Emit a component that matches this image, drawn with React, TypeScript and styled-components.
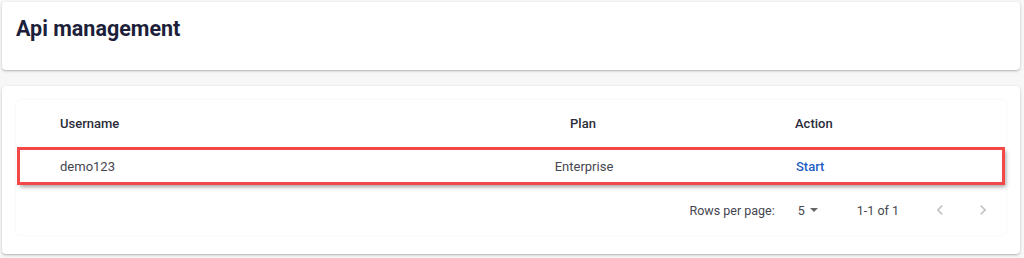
import styled, { createGlobalStyle } from 'styled-components';

const GlobalStyle = createGlobalStyle`
  body {
    margin: 0;
    background: #f7f7f7;
    font-family: Roboto, "Liberation Sans", sans-serif;
  }
`;

const Page = styled.div`
  display: flex;
  flex-direction: column;
  gap: 16px;
  padding: 2px 4px 4px 2px;
  width: 1024px;
  height: 258px;
  box-sizing: border-box;
`;

const Card = styled.div`
  background: #fff;
  border-radius: 4px;
  box-shadow: 0 1px 3px rgba(0, 0, 0, 0.22), 0 1px 1px rgba(0, 0, 0, 0.08);
`;

const HeaderCard = styled(Card)`
  height: 68px;
  box-sizing: border-box;
  padding: 13px 14px;
`;

const Title = styled.h1`
  margin: 0;
  font-size: 21.5px;
  font-weight: 700;
  color: #1d1f3b;
  line-height: 28px;
`;

const TableCard = styled(Card)`
  flex: 1;
  padding: 14px 14px 14px;
`;

const TablePaper = styled.div`
  background: #fff;
  border-radius: 4px;
  box-shadow: 0 0 2px rgba(0, 0, 0, 0.08);
  display: flex;
  flex-direction: column;
`;

const Row = styled.div<{ $highlight?: boolean }>`
  display: grid;
  grid-template-columns: 371px 392px 1fr;
  align-items: center;
  height: ${({ $highlight }) => ($highlight ? '38px' : '47px')};
  box-sizing: border-box;
  ${({ $highlight }) =>
    $highlight
      ? `
    margin: 0 1px;
    outline: 3px solid #f44747;
    outline-offset: -3px;
    box-shadow: 2px 3px 4px -1px rgba(0, 0, 0, 0.35);
  `
      : ''}
`;

const Cell = styled.div<{ $align?: 'left' | 'center'; $pad?: number; $head?: boolean; $link?: boolean }>`
  font-size: 13px;
  text-align: ${({ $align }) => $align || 'left'};
  padding-left: ${({ $pad }) => $pad || 0}px;
  font-weight: ${({ $head, $link }) => ($head || $link ? 500 : 400)};
  color: ${({ $head, $link }) => ($link ? '#1f5fc4' : $head ? '#2b2d3a' : '#45464f')};
`;

const Pagination = styled.div`
  display: flex;
  align-items: center;
  justify-content: flex-end;
  height: 50px;
  padding-right: 11px;
  font-size: 12.5px;
  color: #45464f;
`;

const RowsLabel = styled.span`
  margin-right: 23px;
`;

const Select = styled.span`
  display: flex;
  align-items: center;
  gap: 5px;
  margin-right: 39px;
`;

const Range = styled.span`
  margin-right: 29px;
`;

const NavButton = styled.span`
  display: flex;
  align-items: center;
  justify-content: center;
  width: 24px;
  height: 24px;
  color: #c4c4c4;
  & + & {
    margin-left: 19px;
  }
`;

const Chevron = ({ dir }: { dir: 'left' | 'right' }) => (
  <svg width="20" height="20" viewBox="0 0 24 24" fill="currentColor">
    {dir === 'left' ? (
      <path d="M15.41 7.41 14 6l-6 6 6 6 1.41-1.41L10.83 12z" />
    ) : (
      <path d="M10 6 8.59 7.41 13.17 12l-4.58 4.59L10 18l6-6z" />
    )}
  </svg>
);

export default function App() {
  return (
    <>
      <GlobalStyle />
      <Page>
        <HeaderCard>
          <Title>Api management</Title>
        </HeaderCard>
        <TableCard>
          <TablePaper>
            <Row>
              <Cell $head $pad={44}>Username</Cell>
              <Cell $head $align="center">Plan</Cell>
              <Cell $head $pad={16}>Action</Cell>
            </Row>
            <Row $highlight>
              <Cell $pad={43}>demo123</Cell>
              <Cell $align="center">Enterprise</Cell>
              <Cell $link $pad={16}>Start</Cell>
            </Row>
            <Pagination>
              <RowsLabel>Rows per page:</RowsLabel>
              <Select>
                5
                <svg width="8" height="4" viewBox="0 0 8 4">
                  <path d="M0 0h8L4 4z" fill="#666" />
                </svg>
              </Select>
              <Range>1-1 of 1</Range>
              <NavButton>
                <Chevron dir="left" />
              </NavButton>
              <NavButton>
                <Chevron dir="right" />
              </NavButton>
            </Pagination>
          </TablePaper>
        </TableCard>
      </Page>
    </>
  );
}
